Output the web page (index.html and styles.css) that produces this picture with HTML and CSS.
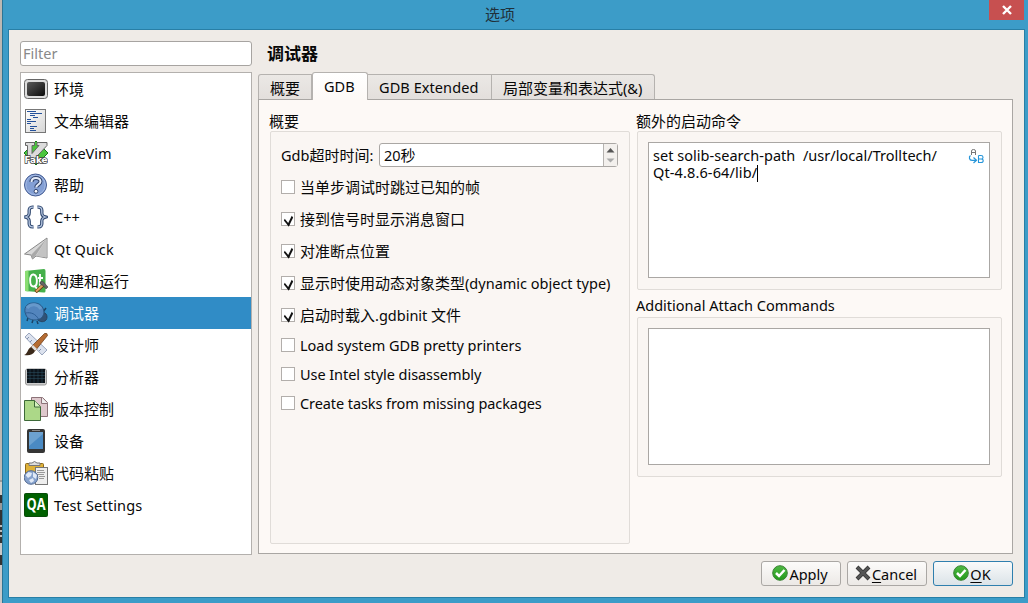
FILE: index.html
```html
<!DOCTYPE html>
<html lang="zh-CN">
<head>
<meta charset="utf-8">
<title>选项</title>
<link rel="stylesheet" href="styles.css">
</head>
<body>
<div class="screen">
<div class="backdrop"></div>
<div class="window">
<header class="titlebar"><span class="caption">选项</span><button class="close" aria-label="Close"><svg width="12" height="12" viewBox="0 0 12 12"><path d="M2 2l8 8M10 2l-8 8" stroke="#fff" stroke-width="2.400"/></svg></button></header>
<main class="client">
<aside class="side">
<div class="filter"><span class="la t-filter">Filter</span></div>
<ul class="list">
<li><svg viewBox="0 0 24 24"><defs><linearGradient id="scr" x2="1" y2="1"><stop stop-color="#5a5a5a"/><stop offset=".5" stop-color="#333"/><stop offset="1" stop-color="#0b0b0b"/></linearGradient><linearGradient id="paper" x2="1" y2="1"><stop stop-color="#fff"/><stop offset="1" stop-color="#d5d5d5"/></linearGradient><linearGradient id="ok" x2="0" y2="1"><stop stop-color="#4fb944"/><stop offset="1" stop-color="#239a1b"/></linearGradient></defs><rect x=".5" y="2.500" width="23" height="19" rx="3" fill="#ddd" stroke="#666"/><rect x="3" y="5" width="18" height="14" rx="2" fill="url(#scr)"/></svg><span>环境</span></li>
<li><svg viewBox="0 0 24 24"><rect x="1.500" y=".5" width="20" height="23" fill="url(#paper)" stroke="#777"/><path d="M3 2.500h9M6 4.500h12M6 6.500h5M3 10.500h4M3 12.500h9M3 14.500h4M6 17.500h7M6 19.500h4M6 21.500h6" stroke="#24519b" stroke-width="1.200"/><path d="M12 4.500h6M9 8.500h5M8 12.500h3" stroke="#24519b"/></svg><span>文本编辑器</span></li>
<li><svg viewBox="0 0 24 24"><path d="M12 0l12 12-12 12L0 12z" fill="#4bc53d" stroke="#19751b"/><path d="M1.500 1.500h9v3H8v8l7-8h-2v-3h10v3L9 19.500H6L3.500 17V4.500h-2z" fill="#dcdcdc" stroke="#666"/><text x=".5" y="21.500" class="fake" textLength="23" lengthAdjust="spacingAndGlyphs">Fake</text></svg><span class="la t-vim">FakeVim</span></li>
<li><svg viewBox="0 0 24 24"><circle cx="11.500" cy="12" r="11" fill="#839fd4" stroke="#455c92"/><circle cx="11.500" cy="12" r="9.700" fill="none" stroke="#a4bae3"/><path d="M7.500 9c0-5.500 9-5 9-.5 0 3-4.300 3-4.300 6" fill="none" stroke="#34466e" stroke-width="4"/><path d="M7.500 9c0-5.500 9-5 9-.5 0 3-4.300 3-4.300 6" fill="none" stroke="#e4ebf8" stroke-width="2"/><circle cx="12" cy="18.300" r="1.900" fill="#fff" stroke="#34466e"/></svg><span>帮助</span></li>
<li><svg viewBox="0 0 24 24" fill="none"><path d="M9.500 2.200C6 1.700 5 3.500 5.200 6.500S5 11 1.500 12c3.500 1 3.900 2.500 3.700 5.500S6 22.300 9.500 21.800M13.500 2.200c3.500-.5 4.500 1.300 4.300 4.300S18 11 21.500 12c-3.500 1-3.900 2.500-3.700 5.500s-.8 4.800-4.300 4.300" stroke="#334b72" stroke-width="3.400"/><path d="M9.500 2.200C6 1.700 5 3.500 5.200 6.500S5 11 1.500 12c3.500 1 3.900 2.500 3.700 5.500S6 22.300 9.500 21.800M13.500 2.200c3.500-.5 4.500 1.300 4.300 4.300S18 11 21.500 12c-3.500 1-3.900 2.500-3.700 5.500s-.8 4.800-4.300 4.300" stroke="#b8c8e2" stroke-width="1.300"/></svg><span class="la t-cpp">C++</span></li>
<li><svg viewBox="0 0 24 24"><path d="M23 1L.5 17l6.500 1 1.500 4 3.500-3 11 2z" fill="#d8d8d8" stroke="#888"/><path d="M22.500 2L7 18l1.500 4L12 18z" fill="#a9a9a9"/><path d="M22.500 2L12 19l10.500 1.500z" fill="#c3c3c3"/></svg><span class="la t-quick">Qt Quick</span></li>
<li><svg viewBox="0 0 24 24"><path d="M1 2L20 0q1.500 0 1.500 2v20q0 2-2 1.500L1 22z" fill="#45b04b"/><path d="M1 2l3.500-.5v21L1 22z" fill="#8add72"/><path d="M9.500 5.500c-4.500-1-4.500 12 0 12s4.500-11 0-12zM10.500 16l2.500 4M16 5v10q0 2 2 2M14 9h5" fill="none" stroke="#fff" stroke-width="1.900"/><path d="M11.500 23l8-7" stroke="#6d3e16" stroke-width="3.500"/><path d="M12 22.500l7-6.500" stroke="#dfa260" stroke-width="1.900"/><path d="M16 13l2.500-1 5.500 6-2 2-3-3.500-3-1.500z" fill="#666" stroke="#333" stroke-width=".5"/></svg><span>构建和运行</span></li>
<li class="selected"><svg viewBox="0 0 24 24"><path d="M4 17l-1 3M9 19l-1 3M13 20l1 3M19 11l3-4" stroke="#1b4265" stroke-width="1.500" fill="none"/><path d="M14 13c3-3 9-2 9 3s-6 6-9 3z" fill="#315276" stroke="#284564"/><path d="M2 14C-1 8 2 2 9 2c7-.5 11 4 11 10-1 5-5 7-9 7-5 0-8-2-9-5z" fill="#5385bd" stroke="#285784"/><path d="M3 7c4-5 11-4 14 1" stroke="#6799cb" stroke-width="3" fill="none"/><path d="M1.500 12c6-1 10 1 13 6" stroke="#2d5f97" fill="none"/></svg><span>调试器</span></li>
<li><svg viewBox="0 0 24 24"><path d="M1 4l4-4 18 17-5 5z" fill="#dce2ee" stroke="#99a5bd"/><path d="M5 4L3 6M8 7L6 9M14 13l-2 2M17 16l-2 2" stroke="#8290ac"/><path d="M20.500.5q3-1 3 2L11 18l-4-4z" fill="#b56c33" stroke="#653610" stroke-width=".7"/><path d="M9 12l4 4-2 2-4-4z" fill="#ddd"/><path d="M7 14l4 4c-2 4-6 5-11 4 4-1 3-6 7-8z" fill="#3b291a"/></svg><span>设计师</span></li>
<li><svg viewBox="0 0 24 24"><rect x="1.500" y="4" width="21" height="16" rx="2" fill="#ccc" stroke="#999"/><rect x="3" y="4" width="18" height="14" fill="#0c131a"/><path d="M6 4v14M10 4v14M14 4v14M18 4v14M3 7.500h18M3 10.500h18M3 13.500h18" stroke="#2d5264" stroke-width=".5"/></svg><span>分析器</span></li>
<li><svg viewBox="0 0 24 24"><path d="M7.500.5h11l5 5v14h-16z" fill="#dec8cc" stroke="#8c7278"/><path d="M17.500.5v6h6" fill="#eee" stroke="#8c7278"/><path d="M.5 3.500h10l6 6v14H.5z" fill="#acd888" stroke="#3d6938"/><path d="M10.500 3.500v6.500h6" fill="#d7f2bf" stroke="#3d6938"/></svg><span>版本控制</span></li>
<li><svg viewBox="0 0 24 24"><rect x="3" y="0" width="18" height="24" rx="2" fill="#353535"/><rect x="5" y="3" width="14" height="17" fill="#4a8ac3"/><path d="M5 3h14v2L5 17z" fill="#6da2d0"/><path d="M8 1.500h8" stroke="#888"/></svg><span>设备</span></li>
<li><svg viewBox="0 0 24 24"><rect x="1.500" y="2.500" width="18" height="18" rx="1" fill="#dfb23a" stroke="#8c681a"/><path d="M5 4.500h11V2h-3q-2.500-3-5 0H5z" fill="#ddd" stroke="#777"/><rect x="11.500" y="6.500" width="12" height="17" fill="#eee" stroke="#777"/><path d="M13 9.500h7M13 11.500h8M13 13.500h7M15 15.500h6M15 17.500h5" stroke="#999"/><circle cx="7" cy="16.500" r="6.800" fill="#86a2cd" stroke="#546c94"/><path d="M1.500 14l3-3 3.500 1-1 3-3 2zM9 11l4 3-1 4-3-2zM5 19l4-2 1 3-3 2z" fill="#e0e9f6"/></svg><span>代码粘贴</span></li>
<li><svg viewBox="0 0 24 24" class="qa-icon"><rect x=".5" y=".5" width="23" height="23" rx="1" fill="#006100" stroke="#084c08"/><text x="2.500" y="17" class="qa" textLength="19" lengthAdjust="spacingAndGlyphs">QA</text></svg><span class="la t-test">Test Settings</span></li>
</ul>
</aside>
<section class="content">
<h1>调试器</h1>
<nav class="tabs">
<div class="tab tab-a">概要</div><div class="tab tab-b active"><span class="la t-gdb">GDB</span></div><div class="tab tab-c"><span class="la t-ext">GDB Extended</span></div><div class="tab tab-d">局部变量和表达式<span class="la t-amp">(&amp;)</span></div>
</nav>
<div class="page">
<section class="col-left">
<h2>概要</h2>
<div class="group options">
<div class="timeout"><label><span class="la t-g">Gdb</span>超时时间<span class="la">:</span></label><div class="spin"><span class="value"><span class="la t-20">20</span>秒</span><span class="arrows"><svg width="13" height="22" viewBox="0 0 13 22"><path d="M2.500 8.500L6.500 4l4 4.500z" fill="#555"/><path d="M2.500 14.500h8l-4 4z" fill="#aaa"/></svg></span></div></div>
<div class="check"><i></i><span>当单步调试时跳过已知的帧</span></div>
<div class="check"><i class="on"></i><span>接到信号时显示消息窗口</span></div>
<div class="check"><i class="on"></i><span>对准断点位置</span></div>
<div class="check"><i class="on"></i><span>显示时使用动态对象类型<span class="la t-dyn">(dynamic object type)</span></span></div>
<div class="check"><i class="on"></i><span>启动时载入<span class="la t-init">.gdbinit </span>文件</span></div>
<div class="shorts">
<div class="check short"><i></i><span class="la t-load">Load system GDB pretty printers</span></div>
<div class="check short"><i></i><span class="la t-intel">Use Intel style disassembly</span></div>
<div class="check short"><i></i><span class="la t-create">Create tasks from missing packages</span></div>
</div>
</div>
</section>
<section class="col-right">
<h2>额外的启动命令</h2>
<div class="group box1"><div class="edit"><div class="code"><div class="la t-set">set solib-search-path&nbsp; /usr/local/Trolltech/</div><div class="la t-lib">Qt-4.8.6-64/lib/<span class="caret"></span></div></div><svg class="ab" width="16" height="16" viewBox="0 0 16 16"><path d="M3.500 7V3q0-1.500 2-1.500T7.500 3v4M3.500 4.500h4" fill="none" stroke="#777"/><path d="M2.500 7.500q-1.500 1-1 3t3 1.800h4M5.500 9.500l3 2.800-3 2.700" fill="none" stroke="#2595d9" stroke-width="1.200"/><path d="M10.500 7.500h2.500q2 0 2 1.800t-2 1.700h-2.500M13 11q2.200 0 2.200 1.700T13 14.500h-2.500v-7" fill="none" stroke="#2595d9" stroke-width="1.100"/></svg></div></div>
<h2 class="attach"><span class="la t-att">Additional Attach Commands</span></h2>
<div class="group box2"><div class="edit"></div></div>
</section>
</div>
<footer class="buttons">
<button class="btn"><svg width="16" height="16" viewBox="0 0 16 16"><circle cx="8" cy="8" r="7.300" fill="url(#ok)" stroke="#3b8236"/><path d="M4 8l3 3 5.500-6" fill="none" stroke="#fff" stroke-width="2.500"/></svg><span class="la t-apply">Apply</span></button>
<button class="btn"><svg width="16" height="16" viewBox="0 0 16 16"><path d="M2 2l12 12M14 2L2 14" stroke="#333" stroke-width="4"/><path d="M2.500 2.500l11 11M13.500 2.500l-11 11" stroke="#555" stroke-width="2.500"/></svg><span class="la t-cancel"><u>C</u>ancel</span></button>
<button class="btn default"><svg width="16" height="16" viewBox="0 0 16 16"><circle cx="8" cy="8" r="7.300" fill="url(#ok)" stroke="#3b8236"/><path d="M4 8l3 3 5.500-6" fill="none" stroke="#fff" stroke-width="2.500"/></svg><span class="la t-ok"><u>O</u>K</span></button>
</footer>
</section>
</main>
</div>
</div>
</body>
</html>
```

FILE: styles.css
```css
* { box-sizing: border-box; }
body { margin: 0; width: 1028px; height: 603px; overflow: hidden; font: 15px/20px "Noto Sans", "Noto Sans CJK SC", sans-serif; color: #080808; }
h1, h2, ul { margin: 0; padding: 0; font-weight: normal; }
button { font: inherit; color: inherit; padding: 0; margin: 0; }
.la { font-size: 14.5px; white-space: pre; }
.screen { display: flex; height: 603px; }
.backdrop { flex: none; width: 2px; background: linear-gradient(#bcb8b3 0 480px, #999 480px 482px, #cfccc7 482px 495px, #333 495px 503px, #999 503px 510px, #333 510px 525px, #bbb 525px 527px, #333 527px 530px, #bbb 530px 532px, #333 532px 535px, #bbb 535px 537px, #333 537px 543px, #c9c9c9 543px 555px, #333 555px 565px, #c9c9c9 565px); }
.window { flex: 1; display: flex; flex-direction: column; background: #3c9cc8; border-left: 1px solid #2a7596; padding: 0 3px 5px 5px; }
.titlebar { flex: none; height: 29px; display: flex; justify-content: flex-end; padding-right: 1px; }
.caption { flex: 1; padding: 4px 0 0 477px; color: #20303a; }
.close { width: 35px; height: 20px; border: 0; background: #c75050; display: flex; align-items: center; justify-content: center; }
.client { flex: 1; display: flex; background: #efebe7; border: 1px solid #287fa6; padding: 11px; gap: 6px; }
.side { width: 232px; display: flex; flex-direction: column; gap: 6px; }
.filter { height: 25px; border: 1px solid #a7a4a1; border-radius: 3px; background: #fff; color: #898989; padding: 1px 2px; }
.list { height: 483px; border: 1px solid #b3b0ad; background: #fff; list-style: none; }
.list li { height: 32px; padding-left: 3px; display: flex; align-items: center; gap: 6px; }
.list svg { flex: none; width: 24px; height: 24px; }
.list .qa-icon { overflow: visible; }
.list .selected { background: #308cc6; color: #fff; }
.fake { font: bold 9px "DejaVu Sans", sans-serif; fill: #fff; stroke: #444; stroke-width: 1.5px; paint-order: stroke; }
.qa { font: bold 16px "Open Sans", sans-serif; fill: #fff; }
.content { width: 755px; display: flex; flex-direction: column; }
h1 { height: 31px; padding: 3px 0 0 9px; font-size: 17px; font-weight: bold; }
.tabs { height: 27px; display: flex; align-items: flex-end; }
.tab { height: 25px; border: 1px solid #b5b2af; border-left-width: 0; border-bottom: 0; background: linear-gradient(#ebe8e5, #e3dfdc); padding: 3px 0 0 11px; white-space: nowrap; }
.tab-a { width: 54px; border-left-width: 1px; border-radius: 3px 0 0; }
.tab-b { width: 56px; border-left-width: 1px; }
.tab-c { width: 124px; padding-top: 2px; }
.tab-d { width: 163px; border-radius: 0 3px 0 0; }
.tab.active { height: 28px; margin-bottom: -1px; background: linear-gradient(#fff, #fdf9f6); border-radius: 3px 3px 0 0; padding-top: 3px; z-index: 1; }
.page { height: 455px; border: 1px solid #a9a6a3; background: #fdf9f6; display: flex; gap: 7px; padding: 11px 10px 9px 11px; }
.col-left { width: 360px; }
.col-right { width: 365px; }
h2 { height: 20px; font-size: 15px; margin-left: -1px; }
.group { border: 1px solid #e0dcd8; border-radius: 2px; background: #faf6f3; padding: 10px; }
.options { height: 413px; padding: 11px 10px; }
.timeout { display: flex; height: 24px; margin-bottom: 4px; }
.timeout label { width: 98px; padding-top: 2px; white-space: nowrap; }
.spin { width: 239px; height: 24px; border: 1px solid #aaa7a4; border-radius: 3px; background: #fff; display: flex; justify-content: space-between; }
.value { padding: 1px 4px; }
.arrows { width: 14px; background: #f3f0ed; border-left: 1px solid #b6b3b0; }
.check { height: 32px; display: flex; align-items: center; gap: 5px; white-space: nowrap; }
.check i { width: 14px; height: 14px; border: 1px solid #b2aeab; background: #fff; display: flex; }
.check i.on::after { content: ""; width: 5px; height: 8px; margin: 1px 0 0 3px; border: solid #111; border-width: 0 2px 2px 0; transform: rotate(26deg) skewY(24deg); }
.shorts { margin-top: -1px; }
.check.short { height: 29px; }
.box1 { height: 159px; }
.box2 { height: 160px; }
.edit { width: 342px; height: 136px; border: 1px solid #aaa7a4; background: #fff; padding: 4px; line-height: 17px; display: flex; justify-content: space-between; }
.box2 .edit { height: 137px; }
.code { white-space: nowrap; }
.code div { height: 17px; }
.caret { display: inline-block; width: 1px; height: 17px; background: #000; vertical-align: -4px; }
.ab { margin: 1px 1px 0 0; }
.attach { height: 27px; padding-top: 5px; }
.t-set { letter-spacing: 0.03px; }
.t-lib { letter-spacing: 0.12px; }
.t-ext { letter-spacing: 0.08px; }
.t-test { letter-spacing: 0.15px; }
.t-quick { letter-spacing: 0.08px; }
.t-create { letter-spacing: -0.08px; }
.t-intel { letter-spacing: -0.06px; }
.t-load { letter-spacing: -0.02px; }
.buttons { display: flex; justify-content: flex-end; gap: 6px; padding-top: 7px; }
.btn { width: 80px; height: 25px; border: 1px solid #aaa7a4; border-radius: 3px; background: linear-gradient(#fcfbfa, #ece9e6); display: flex; align-items: center; justify-content: center; gap: 1px; padding-right: 2px; }
.btn svg { margin-top: -1px; }
.btn.default { border-color: #2f7fae; background: linear-gradient(#f9fafa, #dbe3e8); }
.btn u { text-underline-offset: 2px; }
```
